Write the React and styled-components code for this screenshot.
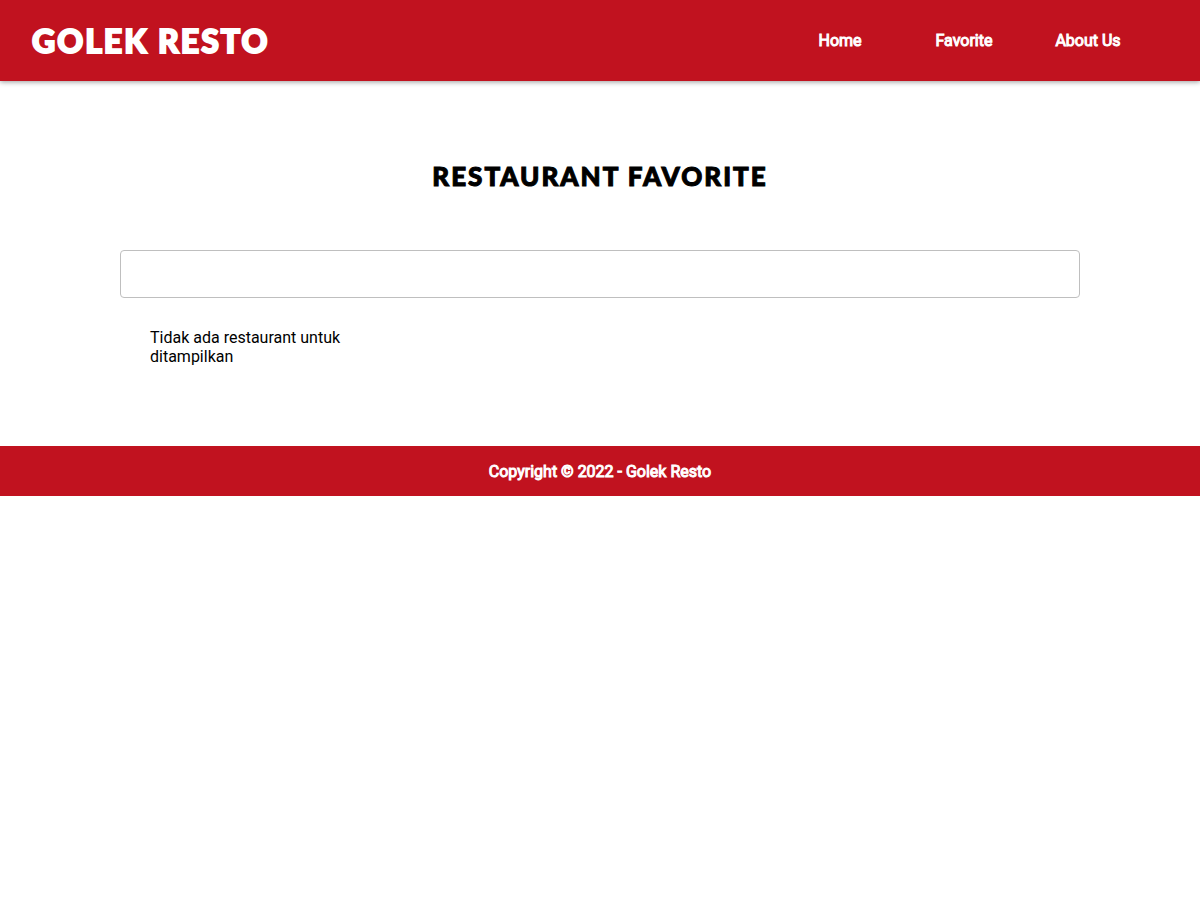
import React from "react";
import styled, { createGlobalStyle } from "styled-components";

const GlobalStyle = createGlobalStyle`
  * { box-sizing: border-box; }
  body {
    margin: 0;
    background: #fff;
    color: #000;
    font: 400 16px/19px Roboto, sans-serif;
  }
`;

const Header = styled.header`
  display: flex;
  align-items: center;
  justify-content: space-between;
  padding: 20px 50px 20px 32px;
  background: #c1121f;
  box-shadow: 0 1px 5px rgba(0, 0, 0, 0.4);
`;

const Title = styled.h1`
  margin: 0;
  font-family: Lato, sans-serif;
  font-weight: 900;
  font-size: ${({ $size }) => $size}px;
  line-height: 41px;
  letter-spacing: 2px;
  text-transform: uppercase;
  -webkit-text-stroke: 2px currentColor;
`;

const Brand = styled(Title)`
  color: #fff;
`;

const NavList = styled.ul`
  display: grid;
  grid-template-columns: repeat(3, 124px);
  margin: 0;
  padding: 0;
  list-style: none;
  text-align: center;
`;

const NavLink = styled.a`
  color: #fff;
  text-decoration: none;
  -webkit-text-stroke: 1px currentColor;
`;

const Main = styled.main`
  padding: 75px 10% 80px;
`;

const PageTitle = styled(Title)`
  margin-bottom: 53px;
  text-align: center;
  -webkit-text-stroke-width: 1px;
`;

const SearchInput = styled.input`
  display: block;
  width: 100%;
  height: 48px;
  margin: 0;
  padding: 12px 20px;
  border: 1px solid #bfbfbf;
  border-radius: 4px;
  background: #fff;
  font: inherit;
`;

const RestaurantGrid = styled.section`
  display: grid;
  grid-template-columns: repeat(4, 1fr);
  gap: 30px;
  padding: 30px 30px 0;
`;

const EmptyMessage = styled.p`
  margin: 0;
`;

const Footer = styled.footer`
  padding: 16px 20px 15px;
  background: #c1121f;
  color: #fff;
  text-align: center;
  -webkit-text-stroke: 1px currentColor;
`;

const links = ["Home", "Favorite", "About Us"];

export default function App() {
  return (
    <>
      <GlobalStyle />
      <Header>
        <Brand $size={32}>Golek Resto</Brand>
        <nav>
          <NavList>
            {links.map((label) => (
              <li key={label}>
                <NavLink href="#">{label}</NavLink>
              </li>
            ))}
          </NavList>
        </nav>
      </Header>
      <Main>
        <PageTitle as="h2" $size={26}>Restaurant Favorite</PageTitle>
        <SearchInput type="text" aria-label="Cari restaurant" />
        <RestaurantGrid>
          <EmptyMessage>Tidak ada restaurant untuk ditampilkan</EmptyMessage>
        </RestaurantGrid>
      </Main>
      <Footer>Copyright © 2022 - Golek Resto</Footer>
    </>
  );
}
